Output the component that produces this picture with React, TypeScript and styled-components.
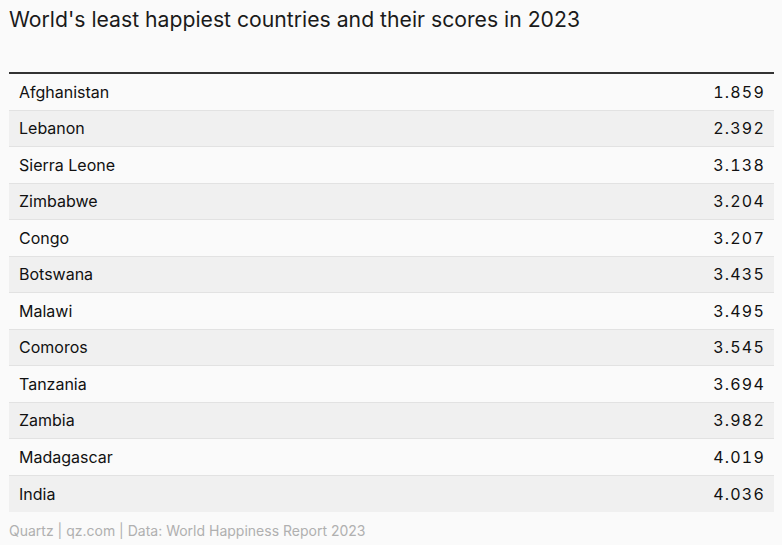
import React from 'react';
import styled, { createGlobalStyle } from 'styled-components';

const rows: [string, string][] = [
  ['Afghanistan', '1.859'],
  ['Lebanon', '2.392'],
  ['Sierra Leone', '3.138'],
  ['Zimbabwe', '3.204'],
  ['Congo', '3.207'],
  ['Botswana', '3.435'],
  ['Malawi', '3.495'],
  ['Comoros', '3.545'],
  ['Tanzania', '3.694'],
  ['Zambia', '3.982'],
  ['Madagascar', '4.019'],
  ['India', '4.036'],
];

const GlobalStyle = createGlobalStyle`
  html, body {
    margin: 0;
    background: #fafafa;
  }
  body {
    font-family: Inter, "Liberation Sans", Arial, sans-serif;
    color: #111;
  }
`;

const Page = styled.div`
  padding: 7px 8px 0 9px;
  width: 765px;
`;

const Title = styled.h1`
  margin: 0;
  font-size: 21.2px;
  font-weight: 400;
  line-height: 24px;
  color: #1a1a1a;
`;

const Table = styled.div`
  margin-top: 41px;
  border-top: 2px solid #333;
  display: flex;
  flex-direction: column;
`;

const Row = styled.div<{ $shaded: boolean }>`
  display: flex;
  justify-content: space-between;
  align-items: center;
  height: 36.5px;
  box-sizing: border-box;
  padding: 0 10px;
  background: ${(p) => (p.$shaded ? '#f0f0f0' : 'transparent')};
  border-bottom: 1px solid #e2e2e2;
  font-size: 16px;
  &:last-child {
    border-bottom: none;
  }
`;

const Name = styled.span`
  color: #111;
`;

const Score = styled.span`
  font-variant-numeric: tabular-nums;
  letter-spacing: 1.2px;
  margin-right: -1px;
  color: #111;
`;

const Footer = styled.div`
  margin-top: 10px;
  font-size: 14px;
  color: #b0b0b0;
`;

export default function App() {
  return (
    <>
      <GlobalStyle />
      <Page>
        <Title>World's least happiest countries and their scores in 2023</Title>
        <Table>
          {rows.map(([name, score], i) => (
            <Row key={name} $shaded={i % 2 === 1}>
              <Name>{name}</Name>
              <Score>{score}</Score>
            </Row>
          ))}
        </Table>
        <Footer>Quartz | qz.com | Data: World Happiness Report 2023</Footer>
      </Page>
    </>
  );
}
